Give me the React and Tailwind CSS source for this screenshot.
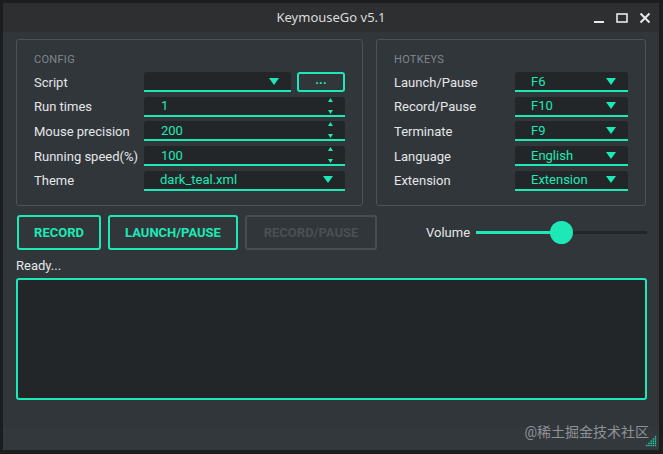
import { useState } from 'react';

const TEAL = 'text-[#1de9b6]';

function Arrow({ className = '' }) {
  return (
    <svg width="10" height="7" viewBox="0 0 10 7" className={className}>
      <polygon points="0,0 10,0 5,7" fill="#1de9b6" />
    </svg>
  );
}

function Combo({ value, width, textPad = 'pl-4', arrowPad = 'pr-4' }) {
  return (
    <div className={`${width} h-[20px] flex items-center justify-between bg-[#232629] border-b-2 border-[#1de9b6] rounded-t-[3px] ${textPad} ${arrowPad}`}>
      <span className={`${TEAL} text-[13px] leading-none`}>{value}</span>
      <Arrow />
    </div>
  );
}

function Spin({ value }) {
  return (
    <div className="w-[201px] h-[20px] flex items-center justify-between bg-[#232629] border-b-2 border-[#1de9b6] rounded-t-[3px] pl-[17px] pr-[12px]">
      <span className={`${TEAL} text-[13px] leading-none`}>{value}</span>
      <div className="flex flex-col justify-between h-[16px]">
        <svg width="5" height="4" viewBox="0 0 5 4"><polygon points="2.5,0 5,4 0,4" fill="#1de9b6" /></svg>
        <svg width="5" height="4" viewBox="0 0 5 4"><polygon points="0,0 5,0 2.5,4" fill="#1de9b6" /></svg>
      </div>
    </div>
  );
}

function Row({ label, labelWidth, children }) {
  return (
    <div className="flex items-center h-[20px]">
      <span className={`${labelWidth} text-[13px] text-[#e4e6e8] leading-none`}>{label}</span>
      {children}
    </div>
  );
}

function GroupBox({ title, width, children }) {
  return (
    <div className={`${width} h-[167px] border border-[#4d5257] rounded-[3px] pl-[17px] pr-[17px] pt-[14px]`}>
      <div className="text-[11px] text-[#80868b] tracking-[0.3px] leading-none h-[12px]">{title}</div>
      <div className="flex flex-col gap-[4.7px] mt-[6px]">{children}</div>
    </div>
  );
}

export default function App() {
  const [volume] = useState(50);

  return (
    <div className="w-[663px] h-[454px] bg-[#1c1d1f] pt-[3px] pl-[3px] pr-[4px] pb-[4px]" style={{ fontFamily: 'Roboto, "Noto Sans CJK SC", sans-serif' }}>
      <div className="w-full h-full flex flex-col bg-[#31363b]">
        {/* title bar */}
        <div className="h-[29px] bg-[#2e2f31] flex items-center relative shrink-0">
          <div className="flex-1 text-center text-[13px] text-[#dcdcdc]" style={{ fontFamily: '"Noto Sans", sans-serif' }}>KeymouseGo v5.1</div>
          <div className="absolute right-[8px] top-0 h-full flex items-center gap-[11px]">
            <svg width="12" height="12" viewBox="0 0 12 12"><rect x="1" y="9" width="10" height="2" fill="#e8e8e8" /></svg>
            <svg width="12" height="12" viewBox="0 0 12 12"><rect x="1" y="2" width="10" height="8" fill="none" stroke="#e8e8e8" strokeWidth="1.6" /></svg>
            <svg width="12" height="12" viewBox="0 0 12 12"><path d="M1.5 1.5 L10.5 10.5 M10.5 1.5 L1.5 10.5" stroke="#e8e8e8" strokeWidth="2" /></svg>
          </div>
        </div>

        <div className="flex-1 flex flex-col px-[13px] pt-[7px]">
          <div className="flex gap-[13px]">
            <GroupBox title="CONFIG" width="w-[347px]">
              <Row label="Script" labelWidth="w-[110px]">
                <div className="flex gap-[6px]">
                  <Combo value="" width="w-[147px]" arrowPad="pr-[12px]" />
                  <div className="w-[48px] h-[20px] border-2 border-[#1de9b6] rounded-[3px] flex items-center justify-center text-[#1de9b6] text-[13px] font-bold leading-none pb-[5px]">...</div>
                </div>
              </Row>
              <Row label="Run times" labelWidth="w-[110px]"><Spin value="1" /></Row>
              <Row label="Mouse precision" labelWidth="w-[110px]"><Spin value="200" /></Row>
              <Row label="Running speed(%)" labelWidth="w-[110px]"><Spin value="100" /></Row>
              <Row label="Theme" labelWidth="w-[110px]">
                <Combo value="dark_teal.xml" width="w-[201px]" textPad="pl-[16px]" arrowPad="pr-[12px]" />
              </Row>
            </GroupBox>

            <GroupBox title="HOTKEYS" width="w-[270px]">
              {[
                ['Launch/Pause', 'F6'],
                ['Record/Pause', 'F10'],
                ['Terminate', 'F9'],
                ['Language', 'English'],
                ['Extension', 'Extension'],
              ].map(([l, v]) => (
                <Row key={l} label={l} labelWidth="w-[121px]">
                  <Combo value={v} width="w-[113px]" textPad="pl-[16px]" arrowPad="pr-[12px]" />
                </Row>
              ))}
            </GroupBox>
          </div>

          <div className="flex items-center mt-[9px] h-[35px]">
            <div className="flex gap-[7px] pl-[1px]">
              <button className="w-[84px] h-[35px] border-2 border-[#1de9b6] rounded-[3px] text-[#1de9b6] text-[13px] font-bold">RECORD</button>
              <button className="w-[130px] h-[35px] border-2 border-[#1de9b6] rounded-[3px] text-[#1de9b6] text-[13px] font-bold">LAUNCH/PAUSE</button>
              <button className="w-[132px] h-[35px] border-2 border-[#484d52] rounded-[3px] text-[#4a4f54] text-[13px] font-bold">RECORD/PAUSE</button>
            </div>
            <div className="flex items-center ml-[49px]">
              <span className="text-[13px] text-[#e4e6e8] mr-[6px]">Volume</span>
              <div className="relative w-[171px] h-[24px] flex items-center">
                <div className="h-[3px] bg-[#1de9b6]" style={{ width: `${volume}%` }} />
                <div className="h-[3px] bg-[#232629] flex-1" />
                <div className="absolute w-[23px] h-[23px] rounded-full bg-[#1de9b6] left-[74px] top-[0px]" />
              </div>
            </div>
          </div>

          <div className="text-[13px] text-[#e4e6e8] mt-[9px] leading-none h-[14px]">Ready...</div>
          <div className="mt-[5px] h-[122px] w-[631px] border-2 border-[#1de9b6] rounded-[3px] bg-[#232629]" />

          <div className="flex-1" />
        </div>

        <div className="h-[23px] shrink-0 bg-[#33383d] flex items-center justify-end relative">
          <span className="text-[14px] text-[#8e9296] mr-[10px] relative -top-[6px]">@稀土掘金技术社区</span>
          <svg width="13" height="13" viewBox="0 0 12 12" className="absolute right-[2px] bottom-[3px]">
            {[[10,2],[8,4],[10,4],[6,6],[8,6],[10,6],[4,8],[6,8],[8,8],[10,8],[2,10],[4,10],[6,10],[8,10],[10,10]].map(([x, y], i) => (
              <rect key={i} x={x} y={y} width="1.2" height="1.2" fill="#1de9b6" />
            ))}
          </svg>
        </div>
      </div>
    </div>
  );
}
